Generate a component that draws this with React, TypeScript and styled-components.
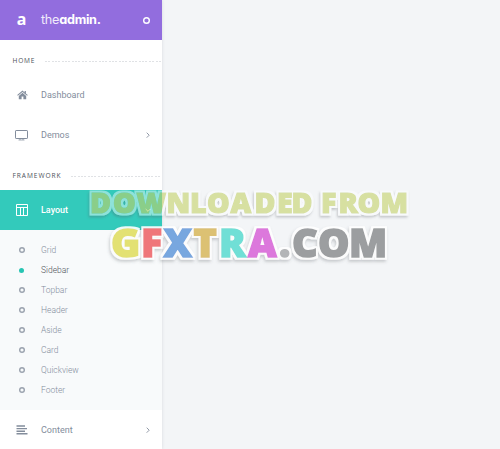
import React from 'react';
import styled, { createGlobalStyle } from 'styled-components';

const GlobalStyle = createGlobalStyle`
  * { box-sizing: border-box; }
  html, body { margin: 0; background: #f3f5f7; overflow: hidden; }
  body { font-family: Roboto, "Liberation Sans", sans-serif; }
`;

const Page = styled.div`
  position: relative;
  width: 500px;
  height: 449px;
  overflow: hidden;
  background: #f3f5f7;
`;

const Sidebar = styled.aside`
  display: flex;
  flex-direction: column;
  width: 162.4px;
  height: 449px;
  overflow: hidden;
  background: #fff;
  box-shadow: 0 0 3px rgba(60, 70, 90, 0.15);
`;

const Header = styled.header`
  display: grid;
  grid-template-columns: 41px 1fr 32px;
  align-items: center;
  flex: none;
  height: 40px;
  background: #926dde;
  color: #fff;
`;

const LogoMark = styled.span`
  padding-left: 2px;
  text-align: center;
  font: 700 16px/39px "Noto Sans", sans-serif;
  height: 40px;
`;

const LogoText = styled.span`
  font: 400 12.7px/40px Inter, sans-serif;
  font-feature-settings: "cv11" 1, "ss03" 1;
  letter-spacing: -0.28px;
  color: #f0eafb;
  strong { font-weight: 700; color: #fff; }
`;

const Ring = styled.span<{ $size: number; $color: string; $filled?: boolean }>`
  justify-self: center;
  width: ${p => p.$size}px;
  height: ${p => p.$size}px;
  border-radius: 50%;
  background: ${p => (p.$filled ? p.$color : 'transparent')};
  box-shadow: ${p => (p.$filled ? 'none' : `inset 0 0 0 1.4px ${p.$color}`)};
`;

const Section = styled.div<{ $spacing: number }>`
  display: flex;
  align-items: center;
  flex: none;
  gap: 9.5px;
  height: 35px;
  padding: 6px 1.5px 0 12.5px;
  color: #4d5259;
  font: 400 6.6px/10px "Open Sans", sans-serif;
  letter-spacing: ${p => p.$spacing}px;
`;

const Dots = styled.span`
  flex: 1;
  height: 1px;
  margin-top: 1px;
  background: repeating-linear-gradient(90deg, #e0e2e5 0 2px, transparent 2px 3.35px);
`;

const Item = styled.a<{ $active?: boolean }>`
  display: grid;
  grid-template-columns: 41px 1fr 29px;
  align-items: center;
  flex: none;
  height: 40px;
  color: ${p => (p.$active ? '#fff' : '#838d9c')};
  background: ${p => (p.$active ? '#33cabb' : 'transparent')};
  font-size: 9px;
  font-weight: ${p => (p.$active ? 500 : 400)};
  line-height: 12px;
  svg { justify-self: center; display: block; }
`;

const IconCell = styled.span<{ $wide?: boolean }>`
  display: flex;
  justify-content: center;
  padding-left: ${p => (p.$wide ? 2 : 3)}px;
`;

const Gap = styled.div`
  flex: none;
  height: 5px;
`;

const SubMenu = styled.div`
  display: flex;
  flex-direction: column;
  flex: none;
  height: 180px;
  padding: 10px 0;
  background: #f8fafb;
`;

const SubItem = styled.a<{ $active?: boolean }>`
  display: grid;
  grid-template-columns: 41px 1fr;
  align-items: center;
  height: 20px;
  color: ${p => (p.$active ? '#4d5259' : '#838d9c')};
  font-size: 8.5px;
  font-weight: 300;
  line-height: 12px;
`;

const Watermark = styled.svg`
  position: absolute;
  left: 80px;
  top: 180px;
  text {
    font-family: "Open Sans", sans-serif;
    font-weight: 800;
    stroke-linejoin: miter;
  }
`;

const letters: [string, string, string][] = [
  ['G', '#e3e173', '111'], ['F', '#ef767a', '141'], ['X', '#78a7df', '163.5'],
  ['T', '#dcc173', '193.5'], ['R', '#70dfd6', '219'], ['A', '#dc78dc', '248'],
  ['.', '#b3b5b7', '279'], ['COM', '#9c9ea0', '292 318 349'],
];

const Chevron = ({ down = false }: { down?: boolean }) => (
  <svg width="8" height="8" viewBox="0 0 8 8" fill="none" stroke="currentColor" strokeWidth=".9">
    <path d={down ? 'M1.7 3 4 5.3 6.3 3' : 'M2.7 1.7 5.2 4.2 2.7 6.7'} />
  </svg>
);

const HomeIcon = () => (
  <svg width="11" height="10" viewBox="0 0 11 10" fill="currentColor">
    <path d="M5.5.6 7.6 2.4V1h1.3v2.5L10.8 5l-.7.8L5.5 2 .9 5.8.2 5Z" />
    <path d="M5.5 2.8 9.2 5.9V9.3H6.4V6.6H4.6v2.7H1.8V5.9Z" />
  </svg>
);

const MonitorIcon = () => (
  <svg width="13" height="11" viewBox="0 0 13 11" fill="none" stroke="currentColor">
    <rect x=".5" y=".5" width="12" height="8" rx=".6" />
    <path d="M5 8.5v1.5M8 8.5v1.5M3.5 10h6" strokeWidth=".7" />
  </svg>
);

const LayoutIcon = () => (
  <svg width="12" height="12" viewBox="0 0 12 12" fill="none" stroke="#fff">
    <path d="M.5.5h11v11H.5ZM.5 3.5h11M4.5 3.5v8M7.5 3.5v8" />
  </svg>
);

const AlignIcon = () => (
  <svg width="12" height="10" viewBox="0 0 12 10" fill="none" stroke="currentColor" strokeWidth="1.4">
    <path d="M.5 1H9M.5 3.6H11M.5 6.2H9M.5 8.8h11" />
  </svg>
);

const subItems = ['Grid', 'Sidebar', 'Topbar', 'Header', 'Aside', 'Card', 'Quickview', 'Footer'];

export default function App() {
  return (
    <Page>
      <GlobalStyle />
      <Sidebar>
        <Header>
          <LogoMark>a</LogoMark>
          <LogoText>the<strong>admin.</strong></LogoText>
          <Ring $size={7} $color="#fff" />
        </Header>
        <Section $spacing={0.8}>HOME<Dots /></Section>
        <Item><IconCell><HomeIcon /></IconCell><span>Dashboard</span></Item>
        <Item><IconCell $wide><MonitorIcon /></IconCell><span>Demos</span><Chevron /></Item>
        <Section $spacing={0.95}>FRAMEWORK<Dots /></Section>
        <Item $active><IconCell><LayoutIcon /></IconCell><span>Layout</span><Chevron down /></Item>
        <SubMenu>
          {subItems.map(name => (
            <SubItem key={name} $active={name === 'Sidebar'}>
              <IconCell $wide={name === 'Sidebar'}>
                <Ring
                  $size={name === 'Sidebar' ? 5 : 6}
                  $color={name === 'Sidebar' ? '#27c5b3' : '#9aa2ae'}
                  $filled={name === 'Sidebar'}
                />
              </IconCell>
              <span>{name}</span>
            </SubItem>
          ))}
        </SubMenu>
        <Item><IconCell><AlignIcon /></IconCell><span>Content</span><Chevron /></Item>
        <Gap />
      </Sidebar>
      <Watermark width="340" height="95" viewBox="80 180 340 95">
        <defs>
          <filter id="outline" filterUnits="userSpaceOnUse" x="80" y="180" width="340" height="95">
            <feMorphology in="SourceAlpha" operator="dilate" radius="2" result="wide" />
            <feGaussianBlur in="wide" stdDeviation=".6" result="soft" />
            <feFlood floodColor="#fff" floodOpacity=".9" />
            <feComposite in2="soft" operator="in" result="edge" />
            <feGaussianBlur in="wide" stdDeviation="1.6" result="haze" />
            <feOffset in="haze" dx="-1" dy="2" result="moved" />
            <feFlood floodColor="#50555c" floodOpacity=".28" />
            <feComposite in2="moved" operator="in" result="shade" />
            <feMerge>
              <feMergeNode in="shade" />
              <feMergeNode in="edge" />
              <feMergeNode in="SourceGraphic" />
            </feMerge>
          </filter>
          <filter id="glassOutline" filterUnits="userSpaceOnUse" x="80" y="180" width="340" height="50">
            <feMorphology in="SourceAlpha" operator="dilate" radius="1.5" result="wide" />
            <feGaussianBlur in="wide" stdDeviation=".5" result="soft" />
            <feComposite in="soft" in2="SourceAlpha" operator="out" result="rim" />
            <feFlood floodColor="#fff" floodOpacity=".45" />
            <feComposite in2="rim" operator="in" result="edge" />
            <feGaussianBlur in="wide" stdDeviation="1.3" result="haze" />
            <feOffset in="haze" dx="-1" dy="2" result="moved" />
            <feComposite in="moved" in2="wide" operator="out" result="outer" />
            <feFlood floodColor="#50555c" floodOpacity=".28" />
            <feComposite in2="outer" operator="in" result="shade" />
            <feComponentTransfer in="SourceGraphic" result="tint">
              <feFuncA type="linear" slope=".6" />
            </feComponentTransfer>
            <feMerge>
              <feMergeNode in="shade" />
              <feMergeNode in="edge" />
              <feMergeNode in="tint" />
            </feMerge>
          </filter>
        </defs>
        <text
          x="90 113 136.5 166.5 190 207 230.5 254.5 277 291.5 313 321 338.5 357.5 380.5"
          y="212.7" fontSize="28.5" fill="#c5d268" stroke="#c5d268" strokeWidth="1.2" filter="url(#glassOutline)">
          DOWNLOADED FROM
        </text>
        <text y="256.7" fontSize="39.5" filter="url(#outline)">
          {letters.map(([char, color, x]) => (
            <tspan key={char} x={x} fill={color} stroke={color} strokeWidth="1.5">{char}</tspan>
          ))}
        </text>
      </Watermark>
    </Page>
  );
}
